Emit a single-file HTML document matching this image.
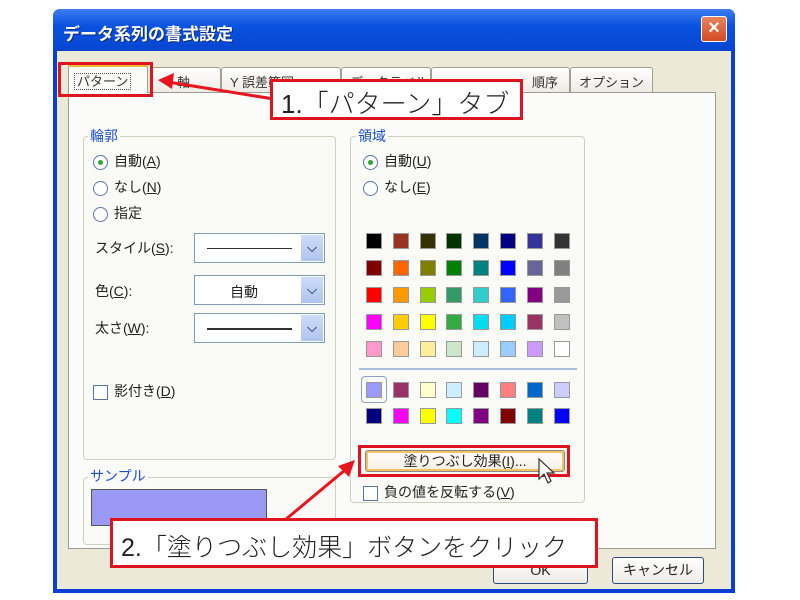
<!DOCTYPE html>
<html><head><meta charset="utf-8"><style>
*{margin:0;padding:0;box-sizing:border-box}
body{width:800px;height:600px;background:#fff;position:relative;overflow:hidden;font-family:"Liberation Sans","Noto Sans CJK JP",sans-serif;font-size:14px;color:#222}
.a{position:absolute}
.win{left:53px;top:9px;width:682px;height:584px;background:#0a3fd6;border-radius:7px 7px 0 0}
.title{left:53px;top:9px;width:682px;height:42px;background:linear-gradient(#3d7df2,#0a52e0 40%,#0646d0);border-radius:7px 7px 0 0;color:#fff;font-weight:bold;font-size:17px;padding:11px 0 0 10px;text-shadow:1px 1px #0a2a80}
.body{left:57px;top:51px;width:674px;height:538px;background:#ece9d8}
.close{left:701px;top:16px;width:26px;height:26px;background:linear-gradient(#e8835e,#d24a22);border:1px solid #fff;border-radius:3px;color:#fff;font-weight:bold;font-size:20px;text-align:center;line-height:23px}
.panel{left:68px;top:92px;width:648px;height:457px;background:#fbfbf9;border:1px solid #9a9c90}
.tab{top:67px;height:26px;background:linear-gradient(#fff,#ecebe4);border:1px solid #a0a090;border-bottom:none;border-radius:3px 3px 0 0;font-size:13px;padding:4px 0 0 8px;color:#333;white-space:nowrap;overflow:hidden}
.grp{border:1px solid #d0d0bf;border-radius:4px;background:#fafaf6}
.gl{color:#1a4fd0;font-size:14px;background:#fbfbf9;padding:0 2px}
.rad{width:15px;height:15px;border:1px solid #5a76a8;border-radius:50%;background:#fff}
.cb{width:15px;height:15px;border:1px solid #5a76a8;background:#fff}
.dd{width:131px;height:30px;border:1px solid #7f9db9;background:#fff}
.dd .btn{position:absolute;right:1px;top:1px;width:22px;height:26px;background:linear-gradient(#cfdcf8,#aec4f0);color:#4d6185;font-size:13px;text-align:center;line-height:26px;font-weight:bold}
.sw{width:16px;height:16px;border:1px solid #999}
.callout{background:#fff;border:3px solid #e0141e;font-size:26px;color:#222;font-weight:300;white-space:nowrap}
.rb{border:3px solid #e0141e}
.bt{background:linear-gradient(#fff,#ecebe6);border:1px solid #2f4a7f;border-radius:3px;text-align:center;font-size:14px}
</style></head><body>
<div class="a win"></div>
<div class="a body"></div>
<div class="a title">データ系列の書式設定</div>
<div class="a close">×</div>

<div class="a tab" style="left:151px;width:70px;padding-left:25px">軸</div>
<div class="a tab" style="left:221px;width:120px;">Y 誤差範囲</div>
<div class="a tab" style="left:341px;width:90px;">データラベル</div>
<div class="a tab" style="left:431px;width:139px;padding-left:100px">順序</div>
<div class="a tab" style="left:570px;width:83px;">オプション</div>
<div class="a panel"></div>
<div class="a tab" style="left:68px;top:64px;height:29px;width:80px;background:#fbfbf9;border-top:3px solid #f0b63a;padding-left:5px"><span style="border:1px dotted #555;padding:0 2px">パターン</span></div>
<div class="a rb" style="left:58px;top:62px;width:95px;height:35px"></div>

<div class="a grp" style="left:83px;top:136px;width:253px;height:324px"></div>
<div class="a gl" style="left:88px;top:126px">輪郭</div>
<div class="a rad" style="left:93px;top:155px"><div class="a" style="left:4px;top:4px;width:5px;height:5px;border-radius:50%;background:#31a631"></div></div>
<div class="a" style="left:114px;top:151px">自動(<u>A</u>)</div>
<div class="a rad" style="left:93px;top:181px"></div>
<div class="a" style="left:114px;top:177px">なし(<u>N</u>)</div>
<div class="a rad" style="left:93px;top:207px"></div>
<div class="a" style="left:114px;top:203px">指定</div>
<div class="a" style="left:95px;top:238px">スタイル(<u>S</u>):</div>
<div class="a dd" style="left:194px;top:233px"><div class="a" style="left:12px;top:14px;width:85px;height:1px;background:#333"></div><div class="btn">⌵</div></div>
<div class="a" style="left:95px;top:281px">色(<u>C</u>):</div>
<div class="a dd" style="left:194px;top:275px"><div class="a" style="left:35px;top:6px">自動</div><div class="btn">⌵</div></div>
<div class="a" style="left:95px;top:318px">太さ(<u>W</u>):</div>
<div class="a dd" style="left:194px;top:313px"><div class="a" style="left:12px;top:14px;width:85px;height:2px;background:#333"></div><div class="btn">⌵</div></div>
<div class="a cb" style="left:93px;top:385px"></div>
<div class="a" style="left:114px;top:381px">影付き(<u>D</u>)</div>

<div class="a grp" style="left:83px;top:477px;width:253px;height:68px"></div>
<div class="a gl" style="left:88px;top:466px">サンプル</div>
<div class="a" style="left:91px;top:489px;width:176px;height:37px;background:#9a99f4;border:1px solid #555"></div>

<div class="a grp" style="left:350px;top:136px;width:235px;height:367px"></div>
<div class="a gl" style="left:356px;top:126px">領域</div>
<div class="a rad" style="left:363px;top:155px"><div class="a" style="left:4px;top:4px;width:5px;height:5px;border-radius:50%;background:#31a631"></div></div>
<div class="a" style="left:384px;top:151px">自動(<u>U</u>)</div>
<div class="a rad" style="left:363px;top:181px"></div>
<div class="a" style="left:384px;top:177px">なし(<u>E</u>)</div>
<div id="grid"></div>
<div class="a" style="left:359px;top:368px;width:218px;height:2px;background:#a7bde0"></div>
<div class="a" style="left:361px;top:376px;width:26px;height:27px;border:1px solid #8ea0c0;border-radius:4px"></div>

<div class="a bt" style="left:365px;top:450px;width:200px;height:22px;border-color:#888;background:linear-gradient(#fff,#f3f0e0);box-shadow:inset 0 0 0 2px #f2c265;line-height:20px">塗りつぶし効果(<u>I</u>)...</div>
<div class="a rb" style="left:358px;top:445px;width:212px;height:32px"></div>
<svg class="a" style="left:537px;top:457px" width="20" height="28" viewBox="0 0 20 28"><path d="M2 2 L2 22 L7 17 L11 26 L14 24 L10 16 L17 16 Z" fill="#fff" stroke="#333" stroke-width="1.2"/></svg>
<div class="a cb" style="left:363px;top:486px"></div>
<div class="a" style="left:384px;top:482px">負の値を反転する(<u>V</u>)</div>

<div class="a bt" style="left:493px;top:557px;width:95px;height:27px;line-height:25px">OK</div>
<div class="a bt" style="left:612px;top:557px;width:92px;height:27px;line-height:25px">キャンセル</div>

<svg class="a" style="left:0;top:0" width="800" height="600"><g stroke="#e8141e" stroke-width="3" fill="#e8141e"><line x1="280" y1="100" x2="168" y2="82"/><polygon points="158,80 174,73 172,89" stroke="none"/><line x1="285" y1="520" x2="345" y2="470"/><polygon points="355,460 349,477 338,466" stroke="none"/></g></svg>
<div class="a callout" style="left:270px;top:79px;width:253px;height:41px;padding:2px 0 0 8px">1.「パターン」タブ</div>
<div class="a callout" style="left:110px;top:518px;width:488px;height:50px;padding:7px 0 0 8px;font-size:25px">2.「塗りつぶし効果」ボタンをクリック</div>

<script>
var rows=[["#000","#993322","#333300","#003300","#003366","#000080","#333399","#333333"],
["#800000","#ff6600","#808000","#008000","#008080","#0000ff","#666699","#808080"],
["#ff0000","#ff9900","#99cc00","#339966","#33cccc","#3366ff","#800080","#999999"],
["#ff00ff","#ffcc00","#ffff00","#33aa44","#00ddee","#00ccff","#993366","#c0c0c0"],
["#ff99cc","#ffcc99","#ffee99","#cce6cc","#cceeff","#99ccff","#cc99ff","#ffffff"],
["#9999ff","#993366","#ffffcc","#cceeff","#660066","#ff8080","#0066cc","#ccccff"],
["#000080","#ff00ff","#ffff00","#00ffff","#800080","#800000","#008080","#0000ff"]];
var ys=[233,260,287,314,341,382,408],h="";
rows.forEach(function(r,i){r.forEach(function(c,j){h+='<div class="a sw" style="left:'+(366+j*26.8)+'px;top:'+ys[i]+'px;background:'+c+'"></div>';});});
document.getElementById("grid").innerHTML=h;
</script>
</body></html>
